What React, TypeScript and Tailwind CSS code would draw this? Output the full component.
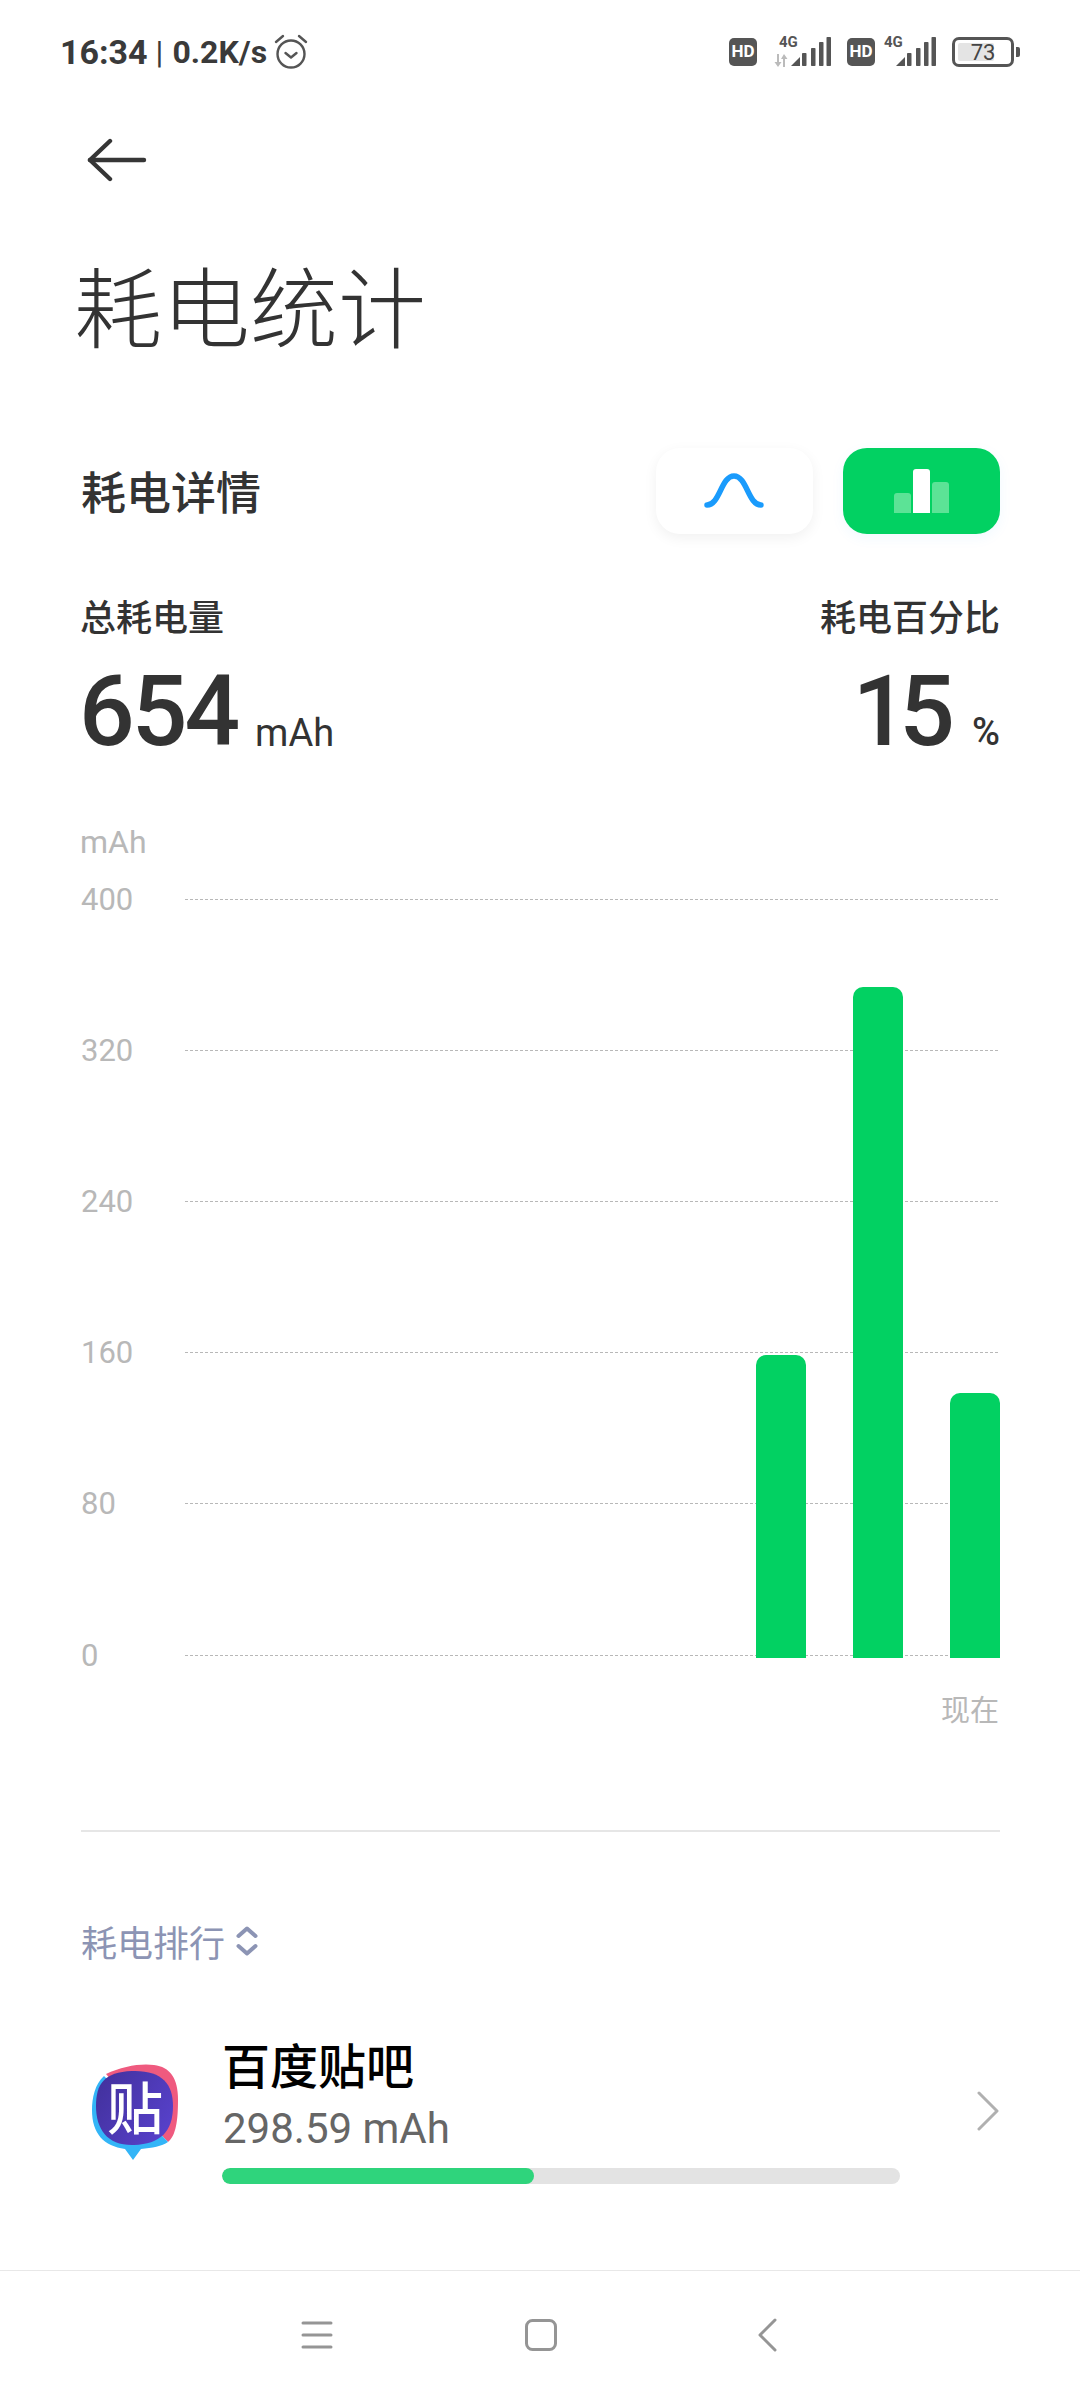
const cjk = '"Noto Sans CJK SC", Roboto, sans-serif';
const dash = 'h-[1px] bg-[repeating-linear-gradient(90deg,#b8b8b8_0,#b8b8b8_3px,transparent_3px,transparent_5px)]';

function Row({ label, h }: { label: string; h: string }) {
  return (
    <div className={`relative ${h}`}>
      <div className="absolute left-0 top-[-14px] text-[31px] leading-[30px] text-[#b8b8b8]" style={{ fontFamily: 'Roboto' }}>{label}</div>
      <div className={`ml-[104px] mr-[2px] ${dash}`} />
    </div>
  );
}

function Signal() {
  return (
    <svg width="40" height="29" viewBox="0 0 40 29" fill="#555">
      <path d="M0 29 L9 20 V29Z" />
      <rect x="11" y="16" width="4.5" height="13" rx="0.8" />
      <rect x="20" y="11" width="4.5" height="18" rx="0.8" />
      <rect x="28" y="5" width="4.5" height="24" rx="0.8" />
      <rect x="35.5" y="0" width="4.5" height="29" rx="0.8" />
    </svg>
  );
}

function Hd() {
  return <div className="w-[28px] h-[28px] rounded-[5px] bg-[#555] text-white text-[17px] font-bold flex items-center justify-center" style={{ fontFamily: 'Roboto' }}>HD</div>;
}

export default function App() {
  return (
    <div className="w-[1080px] h-[2400px] bg-white relative overflow-hidden" style={{ fontFamily: cjk }}>
      <div className="h-[104px] flex items-center justify-between pl-[60px] pr-[60px]">
        <div className="flex items-center text-[#3a3a3a]" style={{ fontFamily: 'Roboto' }}>
          <span className="text-[34px] font-bold">16:34</span>
          <span className="text-[32px] ml-[8px]">|</span>
          <span className="text-[32px] font-bold ml-[9px]">0.2K/s</span>
          <svg className="ml-[7px]" width="34" height="36" viewBox="0 0 34 36" fill="none" stroke="#555" strokeWidth="2.4" strokeLinecap="round" strokeLinejoin="round">
            <circle cx="17" cy="20" r="13.5" />
            <path d="M11.5 19 L17 23.5 L22.5 19" />
            <path d="M2 8 L9 2" />
            <path d="M25 2 L32 8" />
          </svg>
        </div>
        <div className="flex items-center">
          <Hd />
          <div className="ml-[15px] w-[60px] h-[32px] relative">
            <span className="absolute left-[7px] top-[-4px] text-[15px] leading-[20px] font-bold text-[#555]" style={{ fontFamily: 'Roboto' }}>4G</span>
            <svg className="absolute left-[2px] top-[18px]" width="14" height="13" viewBox="0 0 14 13" fill="#bbb">
              <path d="M3 0 H5 V8 H7.5 L4 13 L0.5 8 H3Z" />
              <path d="M9 13 H11 V5 H13.5 L10 0 L7 5 H9Z" />
            </svg>
            <div className="absolute left-[19px] top-[1px]"><Signal /></div>
          </div>
          <div className="ml-[15px]"><Hd /></div>
          <div className="ml-[8px] w-[54px] h-[32px] relative">
            <span className="absolute left-[1px] top-[-4px] text-[15px] leading-[20px] font-bold text-[#555]" style={{ fontFamily: 'Roboto' }}>4G</span>
            <div className="absolute left-[13px] top-[1px]"><Signal /></div>
          </div>
          <div className="ml-[15px] w-[62px] h-[30px] rounded-[7px] border-[3px] border-[#555] p-[3px] relative">
            <div className="w-[36px] h-full bg-[#e4e4e4] rounded-[2px]" />
            <span className="absolute inset-0 flex items-center justify-center text-[22px] text-[#444]" style={{ fontFamily: 'Roboto' }}>73</span>
          </div>
          <div className="ml-[2px] w-[4px] h-[10px] bg-[#555] rounded-r-[2px]" />
        </div>
      </div>

      <div className="pl-[86px] h-[56px] mt-[28px] flex items-center">
        <svg width="62" height="44" viewBox="0 0 62 44" fill="none" stroke="#363636" strokeWidth="4.4" strokeLinecap="round" strokeLinejoin="round">
          <path d="M4 22 H58" />
          <path d="M24 3 L4 22 L24 41" />
        </svg>
      </div>

      <div className="pl-[74px] mt-[65px] text-[88px] leading-[100px] text-[#333] font-light">耗电统计</div>

      <div className="pl-[81px] pr-[80px] mt-[94px]">
        <div className="flex items-center justify-between h-[88px]">
          <div className="text-[45px] text-[#333] font-medium">耗电详情</div>
          <div className="flex gap-[30px]">
            <div className="w-[157px] h-[86px] rounded-[24px] bg-white shadow-[0_4px_14px_rgba(0,0,0,0.06)] flex items-center justify-center">
              <svg className="mr-[2px]" width="60" height="36" viewBox="0 0 60 36" fill="none" stroke="#1a9bfc" strokeWidth="5.5" strokeLinecap="round">
                <path d="M3 32 C16 32 17 3 30 3 C43 3 44 32 57 32" />
              </svg>
            </div>
            <div className="w-[157px] h-[86px] rounded-[24px] bg-[#02d162] shadow-[0_4px_14px_rgba(5,150,255,0.06)] flex items-center justify-center">
              <svg width="56" height="44" viewBox="0 0 56 44">
                <path d="M0 44 V27 a3 3 0 0 1 3-3 H14 a3 3 0 0 1 3 3 V44Z" fill="#5ce396" />
                <path d="M19 44 V3 a3 3 0 0 1 3-3 H33 a3 3 0 0 1 3 3 V44Z" fill="#fff" />
                <path d="M38 44 V16 a3 3 0 0 1 3-3 H52 a3 3 0 0 1 3 3 V44Z" fill="#5ce396" />
              </svg>
            </div>
          </div>
        </div>

        <div className="flex justify-between mt-[58px]">
          <div>
            <div className="text-[36px] leading-[44px] text-[#333] font-medium -ml-[1px]">总耗电量</div>
            <div className="flex items-baseline mt-[29px] -ml-[2px]" style={{ fontFamily: 'Roboto' }}>
              <span className="text-[98px] leading-[92px] text-[#333] font-medium tracking-[-3px]">654</span>
              <span className="text-[38px] leading-none text-[#333] ml-[18px] translate-y-[1px]">mAh</span>
            </div>
          </div>
          <div className="text-right">
            <div className="text-[36px] leading-[44px] text-[#333] font-medium">耗电百分比</div>
            <div className="flex items-baseline justify-end mt-[29px]" style={{ fontFamily: 'Roboto' }}>
              <span className="text-[98px] leading-[92px] text-[#333] font-medium tracking-[-9px]">15</span>
              <span className="text-[38px] leading-none text-[#333] ml-[26px] font-medium">%</span>
            </div>
          </div>
        </div>

        <div className="mt-[67px] -ml-[1px] text-[32px] leading-[34px] text-[#b8b8b8]" style={{ fontFamily: 'Roboto' }}>mAh</div>

        <div className="relative mt-[40px]">
          <Row label="400" h="h-[151px]" />
          <Row label="320" h="h-[151px]" />
          <Row label="240" h="h-[151px]" />
          <Row label="160" h="h-[151px]" />
          <Row label="80" h="h-[152px]" />
          <Row label="0" h="h-[1px]" />
          <div className="absolute right-0 bottom-[-2px] flex items-end gap-[47px]">
            <div className="w-[50px] h-[303px] bg-[#02d162] rounded-t-[10px]" />
            <div className="w-[50px] h-[671px] bg-[#02d162] rounded-t-[10px]" />
            <div className="w-[50px] h-[265px] bg-[#02d162] rounded-t-[10px]" />
          </div>
        </div>

        <div className="text-right mt-[31px] text-[29px] leading-[42px] text-[#b8b8b8] pr-[1px]">现在</div>

        <div className="mt-[101px] border-t-2 border-[#e6e6e6]" />

        <div className="flex items-center mt-[87px] h-[44px]">
          <span className="text-[36px] text-[#8c94b4]">耗电排行</span>
          <svg className="ml-[11px]" width="22" height="30" viewBox="0 0 22 30" fill="none" stroke="#8c94b4" strokeWidth="4" strokeLinecap="round" strokeLinejoin="round">
            <path d="M2.5 10 L11 2.5 L19.5 10" />
            <path d="M2.5 20 L11 27.5 L19.5 20" />
          </svg>
        </div>

        <div className="flex items-center mt-[73px]">
          <svg width="88" height="97" viewBox="0 0 88 97" className="ml-[11px] mt-[4px] shrink-0">
            <defs>
              <linearGradient id="tb" x1="0" y1="0" x2="1" y2="0.6">
                <stop offset="0" stopColor="#41309a" />
                <stop offset="1" stopColor="#5640c8" />
              </linearGradient>
            </defs>
            <path d="M14 10 C30 2 50 -1 62 1 C78 3 86 14 86 36 C86 56 84 72 76 78 L40 40 Z" fill="#ef5a7f" />
            <path d="M12 12 C3 20 0 34 0 46 C0 70 12 82 33 85 L41 96 L49 85 C60 84 70 82 76 78 L40 40Z" fill="#33b5f7" />
            <path d="M4 42 C4 20 12 8 40 7 C70 6 81 20 81 42 C81 68 68 80 42 81 C16 82 4 66 4 42Z" fill="url(#tb)" />
            <text x="43" y="65" textAnchor="middle" fontSize="56" fontWeight="500" fill="#fff" fontFamily='"Noto Sans CJK SC"'>贴</text>
          </svg>
          <div className="ml-[42px] flex-1 min-w-0">
            <div className="text-[48px] leading-[56px] text-black font-medium -translate-y-[1px]">百度贴吧</div>
            <div className="text-[42px] leading-[50px] text-[#666] mt-[12px] pl-[1px]" style={{ fontFamily: 'Roboto' }}>298.59 mAh</div>
            <div className="w-[678px] h-[16px] rounded-full bg-[#e3e3e3] mt-[14px] overflow-hidden">
              <div className="w-[312px] h-full bg-[#2fd47c] rounded-full" />
            </div>
          </div>
          <svg className="shrink-0 mt-[2px]" width="24" height="40" viewBox="0 0 24 40" fill="none" stroke="#b0b0b0" strokeWidth="3" strokeLinecap="round" strokeLinejoin="round">
            <path d="M3 2 L21 20 L3 38" />
          </svg>
        </div>
      </div>

      <div className="absolute left-0 right-0 bottom-0 h-[130px] border-t border-[#e8e8e8] flex items-center">
        <div className="flex items-center w-full pl-[301px] pb-[2px]">
          <svg width="32" height="30" viewBox="0 0 32 30" stroke="#959595" strokeWidth="3" strokeLinecap="round">
            <path d="M2 3 H30" />
            <path d="M2 15 H30" />
            <path d="M2 27 H30" />
          </svg>
          <svg className="ml-[192px]" width="32" height="32" viewBox="0 0 32 32" fill="none" stroke="#959595" strokeWidth="3">
            <rect x="1.5" y="1.5" width="29" height="29" rx="6" />
          </svg>
          <svg className="ml-[201px]" width="20" height="34" viewBox="0 0 20 34" fill="none" stroke="#959595" strokeWidth="3" strokeLinecap="round" strokeLinejoin="round">
            <path d="M17 2 L2 17 L17 32" />
          </svg>
        </div>
      </div>
    </div>
  );
}
